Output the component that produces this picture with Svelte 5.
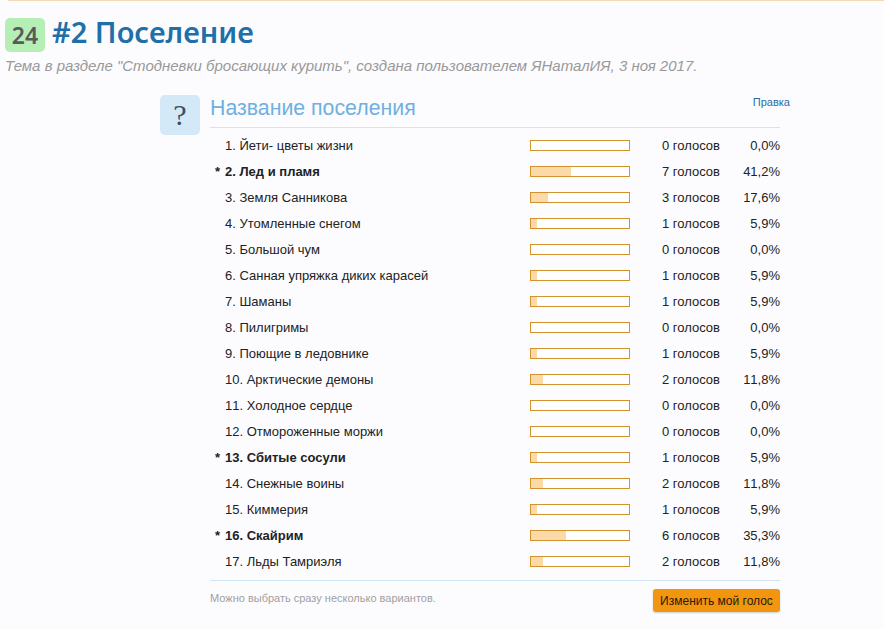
<script>
	const options = [
		{ label: 'Йети- цветы жизни', votes: 0, pct: '0,0' },
		{ label: 'Лед и пламя', votes: 7, pct: '41,2', mine: true },
		{ label: 'Земля Санникова', votes: 3, pct: '17,6' },
		{ label: 'Утомленные снегом', votes: 1, pct: '5,9' },
		{ label: 'Большой чум', votes: 0, pct: '0,0' },
		{ label: 'Санная упряжка диких карасей', votes: 1, pct: '5,9' },
		{ label: 'Шаманы', votes: 1, pct: '5,9' },
		{ label: 'Пилигримы', votes: 0, pct: '0,0' },
		{ label: 'Поющие в ледовнике', votes: 1, pct: '5,9' },
		{ label: 'Арктические демоны', votes: 2, pct: '11,8' },
		{ label: 'Холодное сердце', votes: 0, pct: '0,0' },
		{ label: 'Отмороженные моржи', votes: 0, pct: '0,0' },
		{ label: 'Сбитые сосули', votes: 1, pct: '5,9', mine: true },
		{ label: 'Снежные воины', votes: 2, pct: '11,8' },
		{ label: 'Киммерия', votes: 1, pct: '5,9' },
		{ label: 'Скайрим', votes: 6, pct: '35,3', mine: true },
		{ label: 'Льды Тамриэля', votes: 2, pct: '11,8' }
	];
</script>

<div class="page">
	<header class="head">
		<span class="count">24</span>
		<h1>#2 Поселение</h1>
	</header>
	<p class="sub">Тема в разделе "Стодневки бросающих курить", создана пользователем ЯНаталИЯ, 3 ноя 2017.</p>

	<section class="poll">
		<div class="mark">?</div>
		<div class="body">
			<div class="title-row">
				<h2>Название поселения</h2>
				<a class="edit" href="#edit">Правка</a>
			</div>
			<ol class="rows">
				{#each options as o, i}
					<li class="row" class:mine={o.mine}>
						<span class="star">{o.mine ? '*' : ''}</span>
						<span class="label"><span class="num">{i + 1}.</span> {o.label}</span>
						<span class="bar"><span class="fill" style="width: {parseFloat(o.pct.replace(',', '.'))}%"></span></span>
						<span class="votes">{o.votes} голосов</span>
						<span class="pct">{o.pct}%</span>
					</li>
				{/each}
			</ol>
			<div class="foot">
				<span class="hint">Можно выбрать сразу несколько вариантов.</span>
				<button class="change">Изменить мой голос</button>
			</div>
		</div>
	</section>
</div>

<style>
	:global(body) {
		margin: 0;
		background: #fcfcff;
	}

	.page {
		height: 629px;
		box-sizing: border-box;
		overflow: hidden;
		font-family: 'Liberation Sans', Arial, sans-serif;
		color: #222;
		position: relative;
		padding: 18px 0 0 5px;
	}

	.page::before {
		content: '';
		position: absolute;
		top: 0;
		left: 8px;
		right: 0;
		height: 1px;
		background: #f3d9b5;
	}

	.head {
		display: flex;
		align-items: center;
		gap: 7px;
		height: 34px;
	}

	.count {
		width: 40px;
		height: 34px;
		border-radius: 5px;
		background: #b5efb5;
		color: #5a5a5a;
		font-family: 'Noto Sans', sans-serif;
		font-weight: 600;
		font-size: 23px;
		line-height: 34px;
		text-align: center;
	}

	h1 {
		margin: 0 0 7px;
		font-family: 'Noto Sans', sans-serif;
		font-weight: 600;
		font-size: 29px;
		line-height: 34px;
		color: #1f6fa8;
	}

	.sub {
		margin: 5px 0 0;
		font-size: 15px;
		line-height: 18px;
		font-style: italic;
		color: #999;
	}

	.poll {
		display: flex;
		gap: 10px;
		margin: 20px 0 0 155px;
		width: 630px;
	}

	.mark {
		flex: none;
		width: 40px;
		height: 40px;
		border-radius: 5px;
		background: #d3e9f8;
		color: #3d4f61;
		font-family: 'Liberation Serif', serif;
		font-size: 30px;
		line-height: 40px;
		text-align: center;
	}

	.body {
		width: 570px;
		position: relative;
	}

	.title-row {
		height: 32px;
		border-bottom: 1px solid #cfe5f6;
	}

	h2 {
		margin: 0;
		font-weight: 400;
		font-size: 21.3px;
		line-height: 26px;
		color: #6fb0e0;
	}

	.edit {
		position: absolute;
		top: 0;
		right: -10px;
		font-size: 11px;
		line-height: 14px;
		color: #2b6a9e;
		text-decoration: none;
	}

	.rows {
		list-style: none;
		margin: 4px 0 0;
		padding: 0;
	}

	.row {
		display: flex;
		align-items: center;
		height: 26px;
		font-size: 13px;
		position: relative;
	}

	.mine {
		font-weight: 700;
	}

	.star {
		position: absolute;
		left: 5px;
	}

	.label {
		width: 305px;
		margin-left: 15px;
		white-space: nowrap;
	}

	.num {
		font-kerning: none;
	}

	.bar {
		flex: none;
		width: 100px;
		height: 11px;
		margin-top: 1px;
		box-sizing: border-box;
		border: 1px solid #d4922c;
		background: #fff;
	}

	.fill {
		display: block;
		height: 100%;
		background: #fbd9a9;
	}

	.votes {
		width: 90px;
		text-align: right;
		font-weight: 400;
	}

	.pct {
		width: 60px;
		text-align: right;
		font-weight: 400;
		font-kerning: none;
	}

	.foot {
		display: flex;
		justify-content: space-between;
		margin-top: 6px;
		padding-top: 8px;
		border-top: 1px solid #cfe5f6;
	}

	.hint {
		font-size: 11px;
		line-height: 18px;
		color: #a0a0a0;
	}

	.change {
		width: 127px;
		height: 23px;
		padding: 0;
		border: 0;
		border-radius: 3px;
		background: #f2950f;
		box-shadow: 0 1px 2px rgba(0, 0, 0, 0.2);
		color: #2a1a05;
		font-family: inherit;
		font-size: 12px;
	}
</style>
